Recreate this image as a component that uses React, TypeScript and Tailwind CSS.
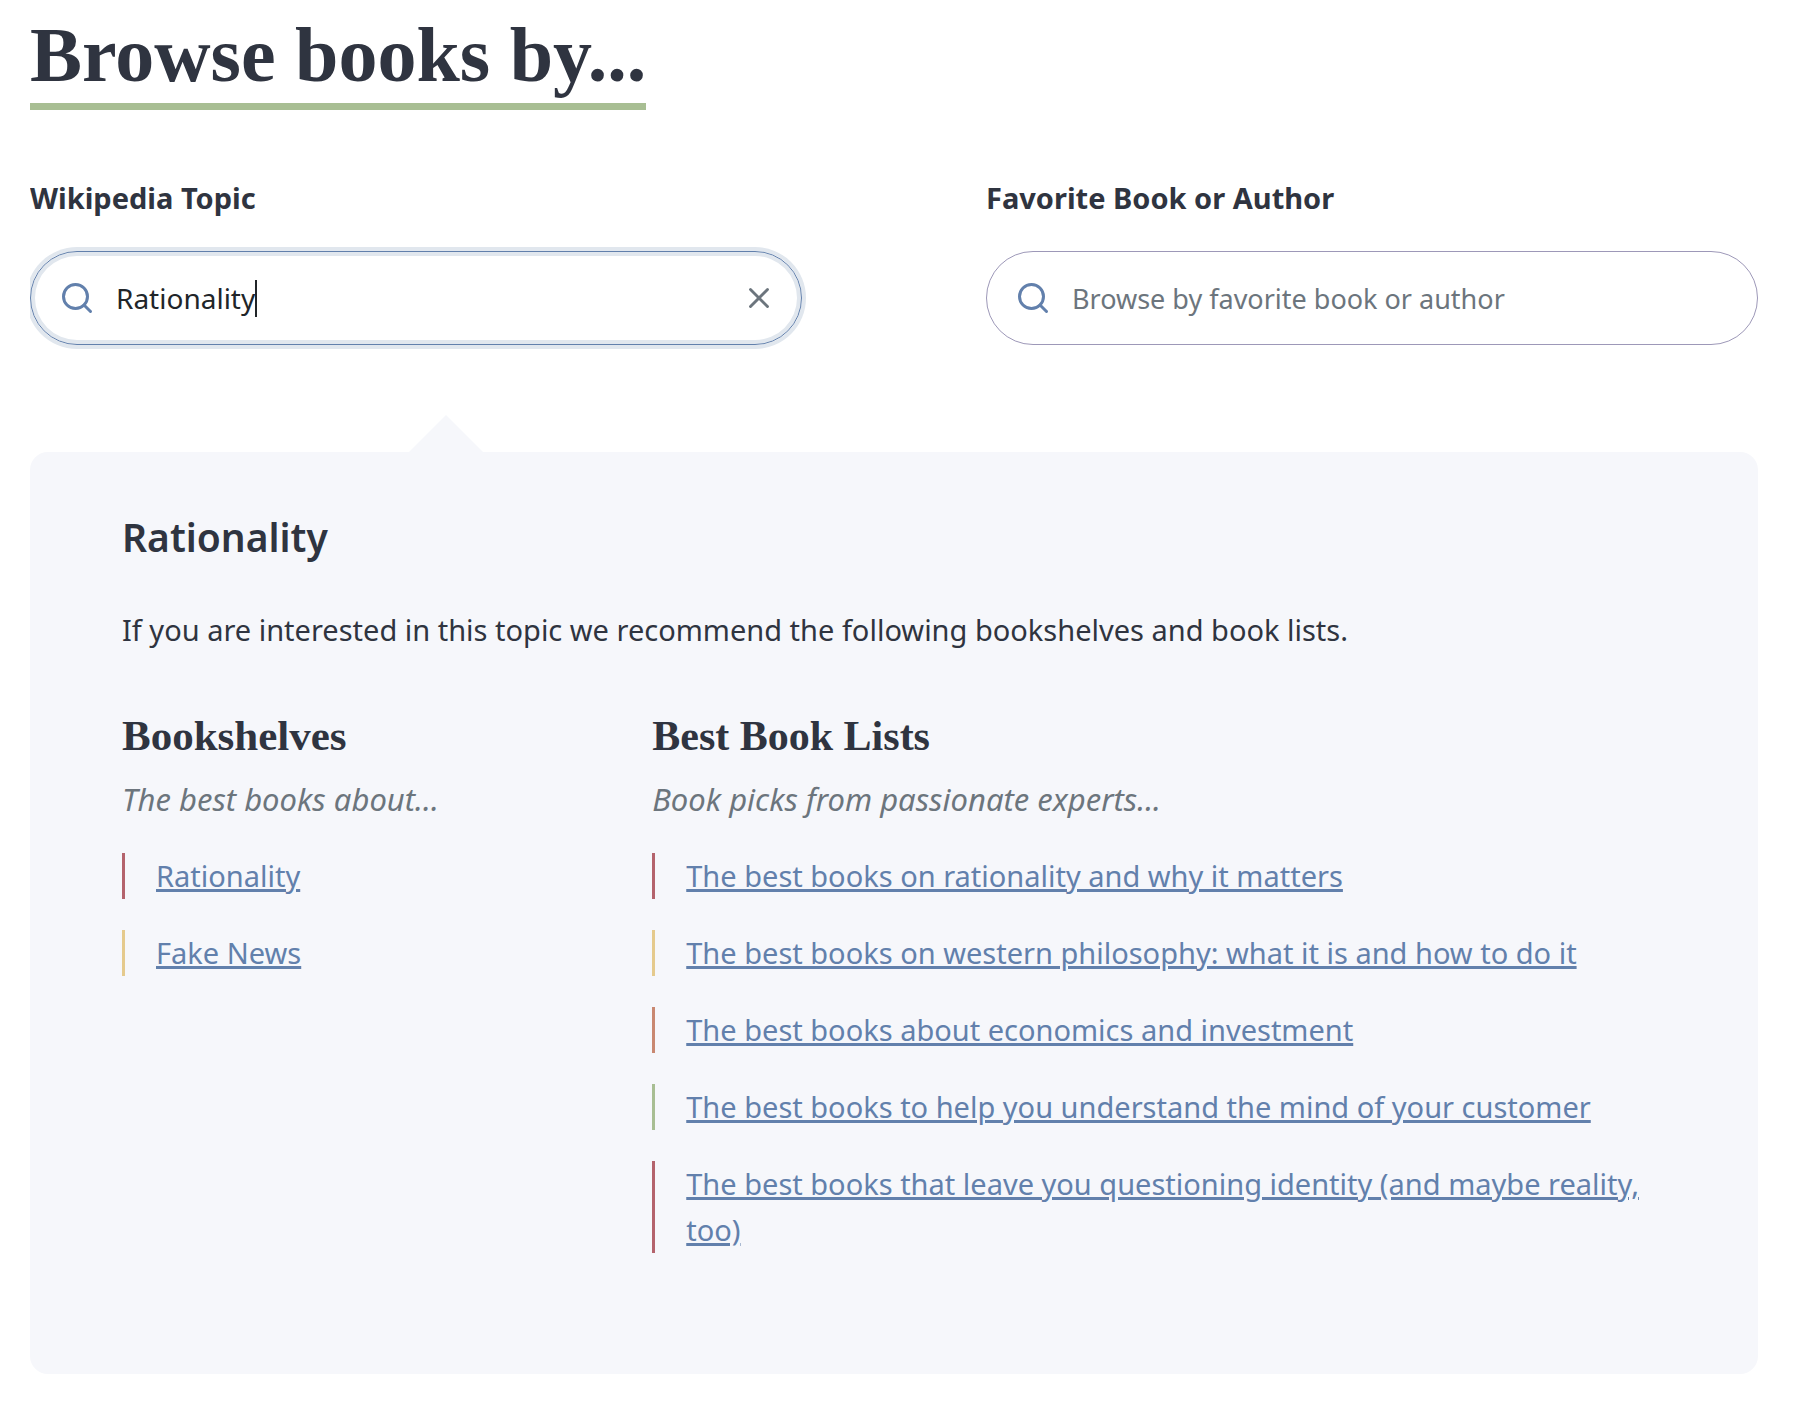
import { useState } from 'react';
import type { ReactNode } from 'react';

const shelves = [
  { label: 'Rationality', bar: 'border-[#b4636c]' },
  { label: 'Fake News', bar: 'border-[#e5ca8d]' },
];

const lists = [
  { label: 'The best books on rationality and why it matters', bar: 'border-[#b4636c]' },
  { label: 'The best books on western philosophy: what it is and how to do it', bar: 'border-[#e5ca8d]' },
  { label: 'The best books about economics and investment', bar: 'border-[#c98871]' },
  { label: 'The best books to help you understand the mind of your customer', bar: 'border-[#a8be93]' },
  { label: 'The best books that leave you questioning identity (and maybe reality, too)', bar: 'border-[#b4636c]' },
];

function SearchIcon() {
  return (
    <svg
      className="size-9 shrink-0 text-[#6280ac]"
      viewBox="0 0 24 24"
      fill="none"
      stroke="currentColor"
      strokeWidth="2"
      strokeLinecap="round"
      strokeLinejoin="round"
      aria-hidden="true"
    >
      <circle cx="11" cy="11" r="8" />
      <line x1="21" y1="21" x2="16.65" y2="16.65" />
    </svg>
  );
}

function ClearIcon() {
  return (
    <svg
      className="size-[34px]"
      viewBox="0 0 24 24"
      fill="none"
      stroke="currentColor"
      strokeWidth="2"
      strokeLinecap="round"
      aria-hidden="true"
    >
      <line x1="18" y1="6" x2="6" y2="18" />
      <line x1="6" y1="6" x2="18" y2="18" />
    </svg>
  );
}

function Column({
  title,
  caption,
  items,
}: {
  title: ReactNode;
  caption: string;
  items: { label: string; bar: string }[];
}) {
  return (
    <section>
      {title}
      <p className="mt-[17px] text-[31px] leading-[46px] text-[#6c757d] italic">{caption}</p>
      <ul className="mt-[31px] flex flex-col gap-[31px]">
        {items.map((item) => (
          <li key={item.label} className={`border-l-3 pl-[31px] text-[29px] leading-[46px] ${item.bar}`}>
            <a
              href="#"
              className="text-[#6280ac] underline decoration-[3px] underline-offset-2"
            >
              {item.label}
            </a>
          </li>
        ))}
      </ul>
    </section>
  );
}

export default function App() {
  const [topic, setTopic] = useState('Rationality');
  const [book, setBook] = useState('');

  return (
    <main className="bg-white pt-[7px] pr-[38px] pb-[42px] pl-[30px] font-['Noto_Sans','Open_Sans',sans-serif] text-[#2f3440]">
      <h1 className="w-fit border-b-7 border-[#a8be93] font-['Liberation_Serif',serif] text-[78px] leading-[96px] font-bold">
        Browse books by...
      </h1>

      <form className="mt-[65px] grid grid-cols-2 gap-[184px] overflow-x-clip">
        <div>
          <label htmlFor="topic" className="block text-[29px] leading-[46px] font-bold">
            Wikipedia Topic
          </label>
          <div className="mt-[30px] flex h-[94px] items-center rounded-full border border-[#6280ac] pr-[25px] pl-7 shadow-[0_0_0_4px_#e1e7ee,inset_0_0_0_4px_#e1e7ee]">
            <SearchIcon />
            <input
              id="topic"
              type="text"
              value={topic}
              onChange={(e) => setTopic(e.target.value)}
              className="ml-[21px] field-sizing-content text-[28px] text-[#212529] caret-transparent outline-none"
            />
            <span className="h-[37px] w-0.5 bg-[#212529]" />
            <button
              type="button"
              aria-label="Clear topic"
              onClick={() => setTopic('')}
              className="ml-auto text-[#6c757d]"
            >
              <ClearIcon />
            </button>
          </div>
        </div>
        <div>
          <label htmlFor="book" className="block text-[29px] leading-[46px] font-bold">
            Favorite Book or Author
          </label>
          <div className="mt-[30px] flex h-[94px] items-center rounded-full border border-[#9d98b8] pr-[25px] pl-7">
            <SearchIcon />
            <input
              id="book"
              type="text"
              value={book}
              onChange={(e) => setBook(e.target.value)}
              placeholder="Browse by favorite book or author"
              className="ml-[21px] min-w-0 flex-1 text-[28px] outline-none placeholder:text-[27px] placeholder:text-[#6c757d]"
            />
          </div>
        </div>
      </form>

      <div className="mt-[70px] ml-[379px] h-0 w-0 border-x-[37px] border-b-[37px] border-x-transparent border-b-[#f6f7fb]" />
      <section className="rounded-[18px] bg-[#f6f7fb] px-[92px] pt-[62px] pb-[121px]">
        <h2 className="text-[39px] leading-[46px] font-semibold">Rationality</h2>
        <p className="mt-[47px] text-[29px] leading-[46px]">
          If you are interested in this topic we recommend the following bookshelves and book lists.
        </p>
        <div className="mt-[60px] grid grid-cols-[34fr_65fr]">
          <Column
            title={
              <h3 className="font-['Liberation_Serif',serif] text-[43px] leading-[46px] font-bold">Bookshelves</h3>
            }
            caption="The best books about..."
            items={shelves}
          />
          <Column
            title={
              <h3 className="font-['Liberation_Serif',serif] text-[42px] leading-[46px] font-bold">Best Book Lists</h3>
            }
            caption="Book picks from passionate experts..."
            items={lists}
          />
        </div>
      </section>
    </main>
  );
}
